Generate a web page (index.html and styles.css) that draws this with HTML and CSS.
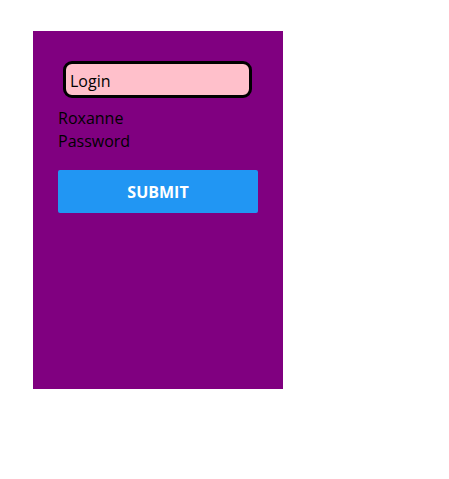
FILE: index.html
```html
<!DOCTYPE html>
<html>
<head>
<meta charset="utf-8">
<link rel="stylesheet" href="styles.css">
</head>
<body>
<div class="panel">
  <div class="field">Login</div>
  <div class="line">Roxanne</div>
  <div class="line">Password</div>
  <button class="submit">SUBMIT</button>
</div>
</body>
</html>
```
FILE: styles.css
```css
html, body {
  margin: 0;
  padding: 0;
  background: #ffffff;
}
body {
  font-family: "Open Sans", "Noto Sans", sans-serif;
  font-size: 16px;
  color: #000;
}
.panel {
  margin: 31px 0 0 33px;
  width: 250px;
  height: 358px;
  box-sizing: border-box;
  background: #800080;
  padding: 30px 25px 0 25px;
  display: flex;
  flex-direction: column;
  align-items: flex-start;
}
.field {
  margin-left: 5px;
  width: 189px;
  height: 37px;
  box-sizing: border-box;
  border: 3px solid #000;
  border-radius: 9px;
  background: #ffc0cb;
  padding: 2px 0 0 4px;
  display: flex;
  align-items: center;
  font-size: 16px;
  margin-bottom: 9px;
}
.line {
  line-height: 23px;
}
.submit {
  margin-top: 17px;
  width: 200px;
  height: 43px;
  border: none;
  border-radius: 2px;
  background: #2196f3;
  color: #fff;
  font-family: "Open Sans", "Noto Sans", sans-serif;
  font-weight: 700;
  font-size: 16px;
  padding: 0;
}
```
